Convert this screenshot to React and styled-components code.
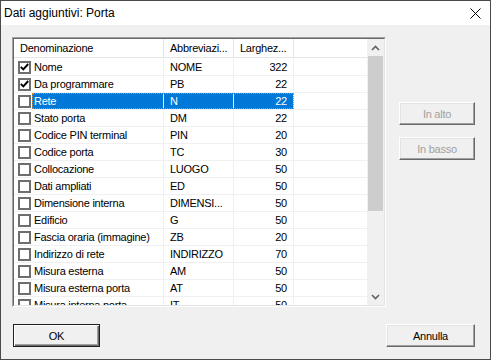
import React from "react";
import styled, { createGlobalStyle } from "styled-components";

const Global = createGlobalStyle`
  html, body { margin: 0; padding: 0; background: #ffffff; }
  * { box-sizing: border-box; }
`;

const Window = styled.div`
  width: 491px;
  height: 360px;
  border: 1px solid #4a4a4a;
  display: flex;
  flex-direction: column;
  font-family: "Liberation Sans", Arial, sans-serif;
  font-size: 11px;
  letter-spacing: -0.25px;
  color: #000;
  overflow: hidden;
`;

const TitleBar = styled.div`
  height: 24px;
  flex: none;
  background: #ffffff;
  display: flex;
  align-items: center;
  justify-content: space-between;
  padding: 0 9px 0 3px;
  font-size: 12px;
  letter-spacing: 0;
`;

const Body = styled.div`
  flex: 1;
  background: #f0f0f0;
  display: flex;
  flex-direction: column;
  padding: 12px 15px 0 11px;
`;

const MainRow = styled.div`
  display: flex;
  align-items: flex-start;
`;

const ListOuter = styled.div`
  width: 374px;
  height: 270px;
  flex: none;
  border-top: 1px solid #a0a0a0;
  border-left: 1px solid #a0a0a0;
  border-right: 1px solid #ffffff;
  border-bottom: 1px solid #ffffff;
`;

const ListInner = styled.div`
  width: 100%;
  height: 100%;
  border-top: 1px solid #696969;
  border-left: 1px solid #696969;
  border-right: 1px solid #e3e3e3;
  border-bottom: 1px solid #e3e3e3;
  background: #ffffff;
  display: flex;
  overflow: hidden;
`;

const Content = styled.div`
  flex: 1;
  overflow: hidden;
  display: flex;
  flex-direction: column;
`;

const Header = styled.div`
  height: 19px;
  flex: none;
  display: flex;
  border-bottom: 1px solid #e5e5e5;
  margin-bottom: 1px;
`;

const HeadCell = styled.div`
  width: ${(p) => (p.$w ? `${p.$w}px` : "auto")};
  flex: ${(p) => (p.$w ? "none" : "1")};
  border-right: ${(p) => (p.$w ? "1px solid #e5e5e5" : "none")};
  padding-left: 6px;
  display: flex;
  align-items: center;
  white-space: nowrap;
  overflow: hidden;
`;

const Row = styled.div`
  height: 17px;
  flex: none;
  display: flex;
  border-bottom: 1px solid #f0f0f0;
`;

const CheckCell = styled.div`
  width: 18px;
  flex: none;
  display: flex;
  align-items: center;
  padding-left: 4px;
`;

const Box = styled.div`
  width: 13px;
  height: 13px;
  border: 2px solid #6e6e6e;
  background: #ffffff;
  display: flex;
  align-items: center;
  justify-content: center;
`;

const SelArea = styled.div`
  display: flex;
  flex: none;
  outline: ${(p) => (p.$sel ? "1px dotted #e08a2c" : "none")};
  outline-offset: -1px;
`;

const Cell = styled.div`
  width: ${(p) => p.$w}px;
  flex: none;
  border-right: 1px solid #f0f0f0;
  background: ${(p) => (p.$sel ? "#0078d7" : "transparent")};
  color: ${(p) => (p.$sel ? "#ffffff" : "#000000")};
  display: flex;
  align-items: center;
  justify-content: ${(p) => (p.$right ? "flex-end" : "flex-start")};
  padding: ${(p) => (p.$right ? "0 6px 0 0" : `0 0 0 ${p.$pl ?? 6}px`)};
  white-space: nowrap;
  overflow: hidden;
`;

const RestCell = styled.div`
  flex: 1;
`;

const ScrollBar = styled.div`
  width: 17px;
  flex: none;
  background: #f0f0f0;
  display: flex;
  flex-direction: column;
`;

const ArrowBtn = styled.div`
  height: 17px;
  flex: none;
  display: flex;
  align-items: center;
  justify-content: center;
`;

const Track = styled.div`
  flex: 1;
  padding: 0 1px;
`;

const Thumb = styled.div`
  height: 155px;
  background: #cdcdcd;
`;

const SideCol = styled.div`
  display: flex;
  flex-direction: column;
  gap: 12px;
  margin-left: 13px;
  margin-top: 65px;
`;

const Btn = styled.div`
  width: ${(p) => p.$w}px;
  height: 23px;
  display: flex;
  align-items: center;
  justify-content: center;
  background: #f0f0f0;
  color: ${(p) => (p.$disabled ? "#a0a0a0" : "#000")};
  border-top: 1px solid #ffffff;
  border-left: 1px solid #ffffff;
  border-right: 1px solid #696969;
  border-bottom: 1px solid #696969;
  box-shadow: inset -1px -1px 0 #a0a0a0, inset 1px 1px 0 #e3e3e3;
  font-size: 11px;
`;

const DefaultBtn = styled(Btn)`
  border: 1px solid #202020;
  box-shadow: inset 1px 1px 0 #ffffff, inset -1px -1px 0 #696969, inset -2px -2px 0 #a0a0a0;
`;

const Footer = styled.div`
  margin-top: 17px;
  display: flex;
  justify-content: space-between;
  padding-left: 1px;
`;

const rows = [
  ["Nome", "NOME", 322, true],
  ["Da programmare", "PB", 22, true],
  ["Rete", "N", 22, false, true],
  ["Stato porta", "DM", 22],
  ["Codice PIN terminal", "PIN", 20],
  ["Codice porta", "TC", 30],
  ["Collocazione", "LUOGO", 50],
  ["Dati ampliati", "ED", 50],
  ["Dimensione interna", "DIMENSI...", 50],
  ["Edificio", "G", 50],
  ["Fascia oraria (immagine)", "ZB", 20],
  ["Indirizzo di rete", "INDIRIZZO", 70],
  ["Misura esterna", "AM", 50],
  ["Misura esterna porta", "AT", 50],
  ["Misura interna porta", "IT", 50],
];

const Check = () => (
  <svg width="9" height="8" viewBox="0 0 9 8">
    <path d="M0.8 3.8 L3.3 6.3 L8.2 1" fill="none" stroke="#000" strokeWidth="1.9" />
  </svg>
);

const Chevron = ({ up }) => (
  <svg width="9" height="6" viewBox="0 0 9 6">
    <path
      d={up ? "M1 5 L4.5 1.5 L8 5" : "M1 1 L4.5 4.5 L8 1"}
      fill="none"
      stroke="#606060"
      strokeWidth="1.6"
    />
  </svg>
);

const CloseIcon = () => (
  <svg width="11" height="11" viewBox="0 0 11 11">
    <path d="M0.5 0.5 L10.5 10.5 M10.5 0.5 L0.5 10.5" stroke="#000" strokeWidth="1" />
  </svg>
);

export default function App() {
  return (
    <>
      <Global />
      <Window>
        <TitleBar>
          <span>Dati aggiuntivi: Porta</span>
          <CloseIcon />
        </TitleBar>
        <Body>
          <MainRow>
            <ListOuter>
              <ListInner>
                <Content>
                  <Header>
                    <HeadCell $w={150}>Denominazione</HeadCell>
                    <HeadCell $w={70}>Abbreviazi...</HeadCell>
                    <HeadCell $w={60}>Larghez...</HeadCell>
                    <HeadCell />
                  </Header>
                  {rows.map(([name, abbr, w, checked, sel]) => (
                    <Row key={name}>
                      <CheckCell>
                        <Box>{checked && <Check />}</Box>
                      </CheckCell>
                      <SelArea $sel={sel}>
                        <Cell $w={132} $pl={2} $sel={sel}>{name}</Cell>
                        <Cell $w={70} $sel={sel}>{abbr}</Cell>
                        <Cell $w={60} $right $sel={sel}>{w}</Cell>
                      </SelArea>
                      <RestCell />
                    </Row>
                  ))}
                </Content>
                <ScrollBar>
                  <ArrowBtn><Chevron up /></ArrowBtn>
                  <Track><Thumb /></Track>
                  <ArrowBtn><Chevron /></ArrowBtn>
                </ScrollBar>
              </ListInner>
            </ListOuter>
            <SideCol>
              <Btn $w={76} $disabled>In alto</Btn>
              <Btn $w={76} $disabled>In basso</Btn>
            </SideCol>
          </MainRow>
          <Footer>
            <DefaultBtn $w={87}>OK</DefaultBtn>
            <Btn $w={89}>Annulla</Btn>
          </Footer>
        </Body>
      </Window>
    </>
  );
}
